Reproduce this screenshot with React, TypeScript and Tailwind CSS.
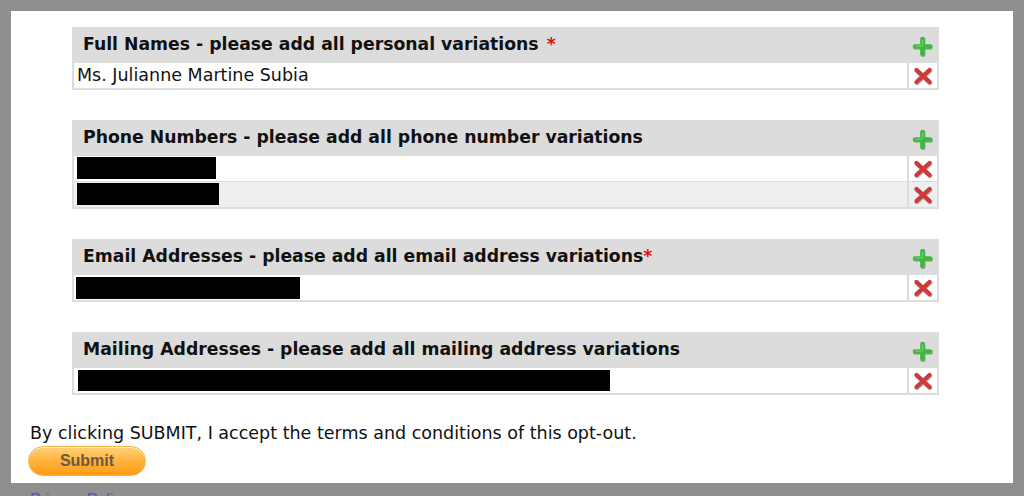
import React from 'react';

const font = { fontFamily: '"DejaVu Sans", Verdana, sans-serif' };

const PlusIcon: React.FC = () => (
    <svg width="21" height="21" viewBox="0 0 21 21">
        <path d="M10.5 3v15M3 10.5h15" stroke="#2f8f2f" strokeWidth="5" strokeLinecap="round" transform="translate(0.6 0.8)" opacity="0.45" />
        <path d="M10.5 3v15M3 10.5h15" stroke="#43b543" strokeWidth="4.6" strokeLinecap="round" />
        <path d="M10.5 4v5.5M4 10h5" stroke="#7bd87b" strokeWidth="1.4" strokeLinecap="round" opacity="0.7" />
    </svg>
);

const RemoveIcon: React.FC = () => (
    <svg width="20" height="18" viewBox="0 0 20 18">
        <path d="M3.5 3l13 12M16.5 3l-13 12" stroke="#8e2a2a" strokeWidth="4.6" strokeLinecap="round" transform="translate(0.5 0.8)" opacity="0.45" />
        <path d="M3.5 3l13 12M16.5 3l-13 12" stroke="#cc3b3b" strokeWidth="4.2" strokeLinecap="round" />
    </svg>
);

type Row = { text?: string; redact?: { w: number; ml: string; h: string; mt: string }; alt?: boolean };

// Mock data
const sections: { title: string; star?: 'space' | 'tight'; rows: Row[] }[] = [
    {
        title: 'Full Names - please add all personal variations',
        star: 'space',
        rows: [{ text: 'Ms. Julianne Martine Subia' }],
    },
    {
        title: 'Phone Numbers - please add all phone number variations',
        rows: [
            { redact: { w: 139, ml: 'ml-[3px]', h: 'h-[22px]', mt: 'mt-[1px]' } },
            { redact: { w: 142, ml: 'ml-[3px]', h: 'h-[22px]', mt: 'mt-[1px]' }, alt: true },
        ],
    },
    {
        title: 'Email Addresses - please add all email address variations',
        star: 'tight',
        rows: [{ redact: { w: 224, ml: 'ml-[2px]', h: 'h-[22px]', mt: 'mt-[2px]' } }],
    },
    {
        title: 'Mailing Addresses - please add all mailing address variations',
        rows: [{ redact: { w: 532, ml: 'ml-[4px]', h: 'h-[21px]', mt: 'mt-[2px]' } }],
    },
];

const Section: React.FC<{ title: string; star?: 'space' | 'tight'; rows: Row[] }> = ({ title, star, rows }) => (
    <div className="w-[867px] bg-[#dcdcdc] px-[2px] pb-[2px]">
        {/* Header */}
        <div className="flex h-[35px] items-center justify-between">
            <span className="pl-[9px] text-[17.25px] font-bold text-[#111]">
                {title}
                {star === 'space' && <span className="ml-[8px] text-[#e01010]">*</span>}
                {star === 'tight' && <span className="text-[#e01010]">*</span>}
            </span>
            <span className="mr-[4px] mt-[4px] flex">
                <PlusIcon />
            </span>
        </div>
        {/* Rows */}
        <div className="flex flex-col gap-[1px] pt-[1px]">
            {rows.map((r, i) => (
                <div key={i} className="flex h-[25px] gap-[2px]">
                    <div className={`flex-1 ${r.alt ? 'bg-[#efefef]' : 'bg-white'}`}>
                        {r.text && <div className="pl-[3px] text-[17.5px] leading-[25px] text-[#111]">{r.text}</div>}
                        {r.redact && (
                            <div className={`${r.redact.ml} ${r.redact.mt} ${r.redact.h} bg-black`} style={{ width: r.redact.w }} />
                        )}
                    </div>
                    <div className={`flex w-[28px] items-center justify-center ${r.alt ? 'bg-[#efefef]' : 'bg-white'}`}>
                        <RemoveIcon />
                    </div>
                </div>
            ))}
        </div>
    </div>
);

export default function App() {
    return (
        <div className="h-[496px] w-[1024px] overflow-hidden bg-[#8f8f8f] px-[11px] pt-[11px]" style={font}>
            <div className="flex h-[472px] flex-col bg-white pl-[61px] pt-[16px]">
                <div className="flex flex-col gap-[30px]">
                    {sections.map((s, i) => (
                        <Section key={i} title={s.title} star={s.star} rows={s.rows} />
                    ))}
                </div>
                <div className="-ml-[42px] mt-[28px] text-[17.5px] leading-[20px] text-[#111]">
                    By clicking SUBMIT, I accept the terms and conditions of this opt-out.
                </div>
                <button
                    className="-ml-[44px] mt-[3px] h-[30px] w-[118px] rounded-full border border-[#f5b44a] bg-gradient-to-b from-[#ffd27a] via-[#ffb23a] to-[#ff9c12] text-[16px] font-bold text-[#6b5a3e] shadow-[inset_0_1px_0_rgba(255,255,255,0.6)]"
                    style={{ fontFamily: '"Liberation Sans", Arial, sans-serif' }}
                >
                    Submit
                </button>
            </div>
            <div className="ml-[19px] mt-[5px] text-[16px] text-[#5a52b8] underline" style={{ fontFamily: '"Liberation Sans", Arial, sans-serif' }}>
                Privacy Policy
            </div>
        </div>
    );
}
